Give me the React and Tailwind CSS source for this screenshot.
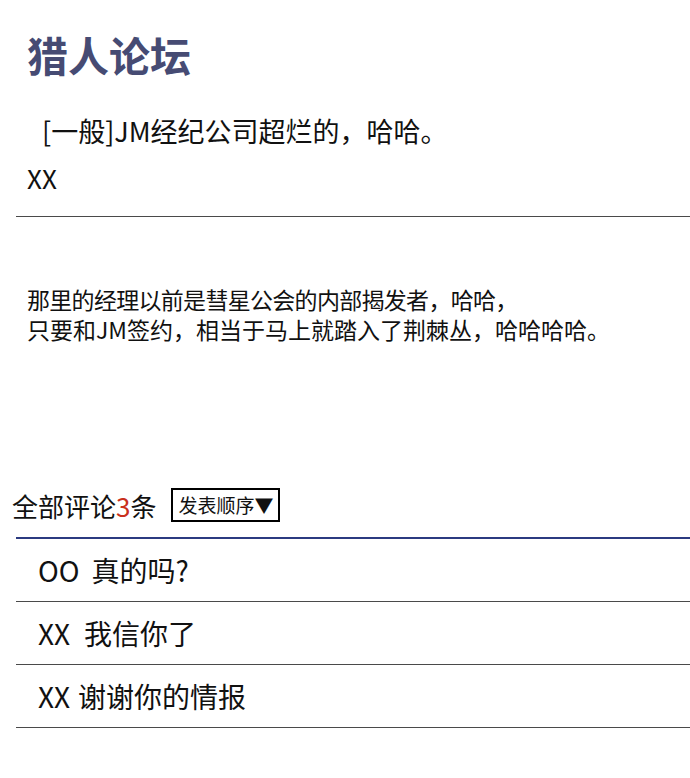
import React from 'react';

const post = {
  board: '猎人论坛',
  title: '[一般]JM经纪公司超烂的，哈哈。',
  author: 'XX',
  body: [
    { text: '那里的经理以前是彗星公会的内部揭发者，哈哈，', cls: 'tracking-[-0.7px]' },
    { text: '只要和JM签约，相当于马上就踏入了荆棘丛，哈哈哈哈。', cls: '' },
  ],
};

const comments = [
  { user: 'OO', text: '真的吗?', gap: 'ml-[12px]' },
  { user: 'XX', text: '我信你了', gap: 'ml-[14px]' },
  { user: 'XX', text: '谢谢你的情报', gap: 'ml-[8px]' },
];

function CommentRow({ c }) {
  return (
    <div className="h-[63px] border-b border-[#4a4a4a] flex items-center pl-[22px] text-[28px] text-[#111]">
      <span>{c.user}</span>
      <span className={c.gap}>{c.text}</span>
    </div>
  );
}

export default function App() {
  return (
    <div
      className="w-[690px] h-[778px] bg-white overflow-hidden"
      style={{ fontFamily: '"Noto Sans CJK SC", "Noto Sans", sans-serif' }}
    >
      <div className="pl-[27px] pt-[26px]">
        <h1 className="text-[41px] leading-[56px] font-bold text-[#464b73]">{post.board}</h1>
        <div className="mt-[29px] pl-[15px] text-[27px] leading-[40px] text-[#111]">{post.title}</div>
        <div className="mt-[9px] text-[26px] leading-[36px] text-[#111]">{post.author}</div>
      </div>

      <div className="ml-[16px] mt-[20px] border-t border-[#4a4a4a]" />

      <div className="pl-[27px] mt-[67px] text-[23px] leading-[30px] text-[#111]">
        {post.body.map((line, i) => (
          <div key={i} className={line.cls}>
            {line.text}
          </div>
        ))}
      </div>

      <div className="mt-[141px] h-[40px] pl-[12px] flex items-center">
        <span className="text-[26px] text-[#111]">
          全部评论<span className="text-[#c9301c]">3</span>条
        </span>
        <div className="ml-[15px] h-[34px] px-[5px] border-2 border-black flex items-center text-[19px] text-[#111]">
          发表顺序▼
        </div>
      </div>

      <div className="ml-[16px] mt-[12px] border-t-2 border-[#2b3a80]">
        {comments.map((c, i) => (
          <CommentRow key={i} c={c} />
        ))}
      </div>
    </div>
  );
}
